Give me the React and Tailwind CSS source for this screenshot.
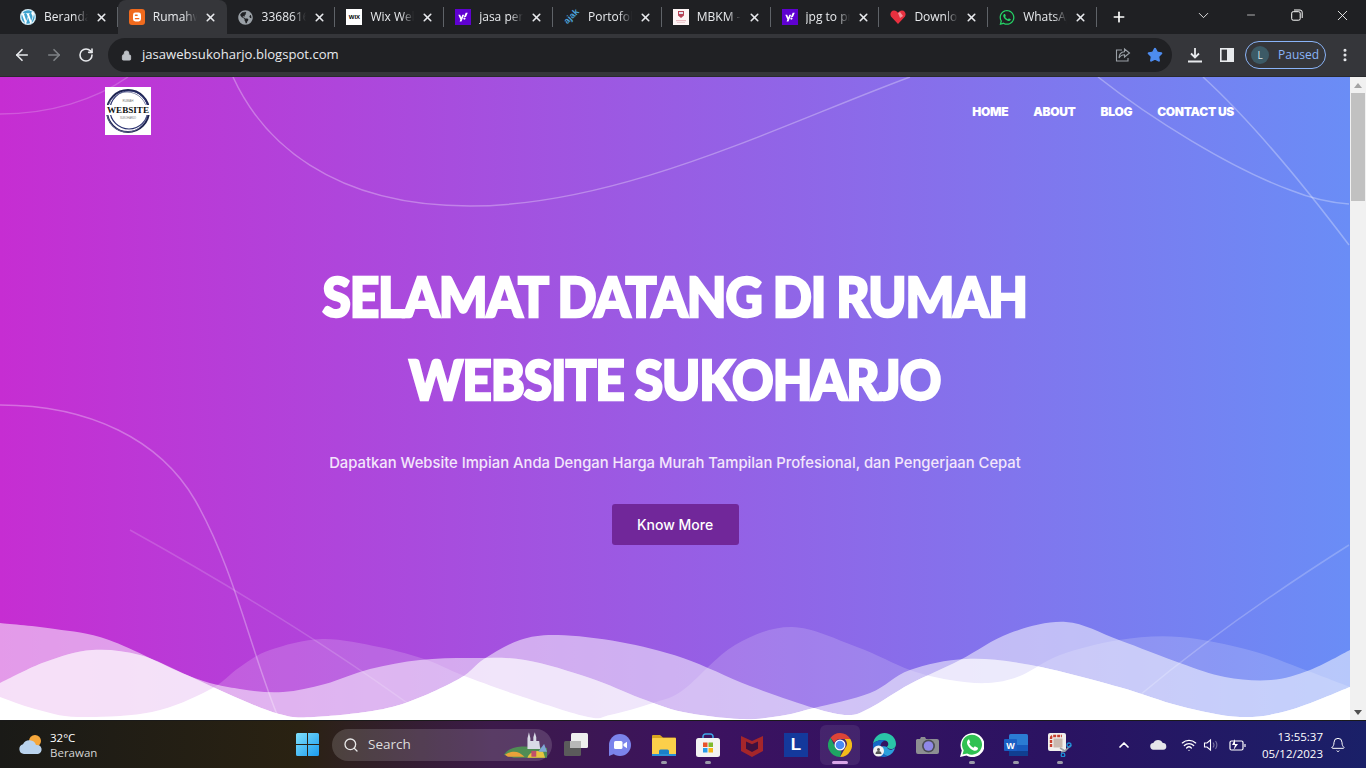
import React from "react";
import { FaWordpress, FaWhatsapp, FaYahoo, FaGlobeAmericas } from "react-icons/fa";
import { Lock, X, Plus, ArrowLeft, ArrowRight, RotateCw, ChevronDown, Minus, Star, ChevronUp, Wifi, Bell, Search, MoreVertical } from "lucide-react";

const smooth = (pts) => {
  let d = `M${pts[0][0]} ${pts[0][1]}`;
  for (let i = 0; i < pts.length - 1; i++) {
    const p0 = pts[Math.max(i - 1, 0)], p1 = pts[i], p2 = pts[i + 1], p3 = pts[Math.min(i + 2, pts.length - 1)];
    const c1x = p1[0] + (p2[0] - p0[0]) / 6, c1y = p1[1] + (p2[1] - p0[1]) / 6;
    const c2x = p2[0] - (p3[0] - p1[0]) / 6, c2y = p2[1] - (p3[1] - p1[1]) / 6;
    d += `C${c1x} ${c1y} ${c2x} ${c2y} ${p2[0]} ${p2[1]}`;
  }
  return d;
};
const closed = (pts) => smooth(pts) + "L1350 780L0 780Z";

const B = [[0,623],[55,629],[109,640],[192,677],[240,689],[283,692],[325,684],[370,669],[420,660],[470,658],[525,660],[590,678],[640,698],[683,712],[740,719],[780,716],[814,708],[870,693],[910,670],[966,659],[1031,665],[1119,687],[1180,706],[1240,717],[1290,710],[1350,687]];
const C = [[0,683],[45,662],[92,650],[140,655],[187,675],[235,697],[279,714],[314,717],[392,707],[457,680],[484,659],[520,640],[558,635],[620,642],[683,658],[750,686],[814,708],[848,715],[870,708],[910,684],[960,660],[1010,633],[1066,622],[1119,640],[1180,663],[1225,677],[1271,680],[1310,670],[1350,650]];
const D = [[0,697],[35,709],[78,717],[152,712],[209,690],[240,667],[270,650],[322,639],[379,647],[427,660],[462,675],[523,697],[588,717],[610,715],[653,703],[683,690],[735,645],[792,627],[857,647],[910,670],[950,680],[988,683],[1020,676],[1060,655],[1119,640],[1180,637],[1249,650],[1300,668],[1350,687]];

const HeroArt = () => (
  <svg className="absolute inset-0 w-full h-full" viewBox="0 77 1350 643" preserveAspectRatio="none">
    <defs>
      <clipPath id="cb"><path d={closed(B)} /></clipPath>
      <clipPath id="cc"><path d={closed(C)} /></clipPath>
    </defs>
    <g fill="none" stroke="#fff" strokeOpacity="0.3" strokeWidth="1.500">
      <path d="M233 77C262 140 330 206 470 206C620 206 780 125 910 77" />
      <path d="M0 114C50 114 95 100 128 77" strokeOpacity="0.2" />
      <path d="M0 405C90 405 160 440 195 500C235 570 250 650 280 722" />
      <path d="M130 530C220 580 320 640 410 705" strokeOpacity="0.16" />
      <path d="M1349 545C1270 595 1200 645 1140 695" strokeOpacity="0.22" />
      <path d="M1098 77C1150 118 1230 168 1290 190C1315 200 1335 203 1349 204" />
      <path d="M1203 77C1250 120 1300 180 1349 245" />
    </g>
    <path d={closed(D)} fill="#fff" fillOpacity="0.17" />
    <path d={closed(B)} fill="#fff" fillOpacity="0.52" />
    <path d={closed(C)} fill="#fff" fillOpacity="0.52" />
    <g clipPath="url(#cb)"><path d={closed(C)} fill="#fff" fillOpacity="0.35" /></g>
    <g clipPath="url(#cb)"><g clipPath="url(#cc)"><path d={closed(D)} fill="#fff" /></g></g>
  </svg>
);

const Logo = () => (
  <div className="w-[46px] h-12 bg-white">
    <svg viewBox="0 0 46 48" className="w-full h-full">
      <circle cx="23" cy="24" r="21" fill="none" stroke="#1d2350" strokeWidth="2" />
      <circle cx="24" cy="23" r="19" fill="none" stroke="#2b3270" strokeWidth="1.200" />
      <circle cx="22" cy="25" r="20" fill="none" stroke="#6a6f98" strokeWidth="0.8" />
      <rect x="0" y="18" width="46" height="10" fill="#fff" />
      <text x="23" y="26" textAnchor="middle" fontSize="8.400" fontWeight="700" fontFamily="Liberation Serif, serif" fill="#111" textLength="42" lengthAdjust="spacingAndGlyphs">WEBSITE</text>
      <text x="23" y="15" textAnchor="middle" fontSize="3" fontFamily="Liberation Sans, sans-serif" fill="#777">RUMAH</text>
      <text x="23" y="32" textAnchor="middle" fontSize="2.600" fontFamily="Liberation Sans, sans-serif" fill="#777">SUKOHARJO</text>
    </svg>
  </div>
);

const Yahoo = () => (
  <span className="w-4 h-4 bg-[#5f01d1] flex items-center justify-center text-white"><FaYahoo size={10} /></span>
);
const Blogger = () => (
  <svg viewBox="0 0 16 16" className="w-4 h-4">
    <rect width="16" height="16" rx="3" fill="#f06a1d" />
    <rect x="4" y="3.500" width="8" height="9" rx="2.400" fill="#fff" />
    <rect x="5.800" y="5.600" width="3" height="1.300" rx=".6" fill="#f06a1d" />
    <rect x="5.800" y="9" width="4.600" height="1.300" rx=".6" fill="#f06a1d" />
  </svg>
);
const WixIcon = () => (
  <span className="w-4 h-4 bg-white flex items-center justify-center text-[6px] font-bold text-black [font-family:'Liberation_Sans',sans-serif]">WIX</span>
);
const Ajak = () => (
  <span className="w-4 h-4 flex items-center justify-center text-[9px] font-bold text-[#4ba3d9] -rotate-45 [font-family:'Liberation_Sans',sans-serif]">ajak</span>
);
const Mbkm = () => (
  <svg viewBox="0 0 16 16" className="w-4 h-4">
    <rect width="16" height="16" fill="#fdf5f5" />
    <path d="M5 2h6v4.500L8 9 5 6.500z" fill="#b54456" />
    <rect x="6" y="3" width="4" height="2" fill="#dfe3ee" />
    <rect x="3" y="11" width="10" height="1.200" fill="#e9b9c0" />
    <rect x="4" y="13" width="8" height="1" fill="#efd0d4" />
  </svg>
);
const Heart = () => (
  <svg viewBox="0 0 16 16" className="w-4 h-4">
    <path d="M8 15L1 7.500C-.5 5 1 1.500 4 1.500c2 0 3 1 4 2.300 1-1.300 2-2.300 4-2.300 3 0 4.500 3.500 3 6z" fill="#e8303f" />
    <path d="M8 4l2-1 3 4-3 2z" fill="#f4929b" />
  </svg>
);

const tabs = [
  { t: "Beranda", i: <FaWordpress size={16} className="text-[#3fa3cf] bg-white rounded-full" /> },
  { t: "Rumahwebsite", i: <Blogger />, active: true },
  { t: "33686160", i: <FaGlobeAmericas size={15} className="text-[#9aa0a6]" /> },
  { t: "Wix Website", i: <WixIcon /> },
  { t: "jasa pembuat", i: <Yahoo /> },
  { t: "Portofolio", i: <Ajak /> },
  { t: "MBKM - Kampus", i: <Mbkm /> },
  { t: "jpg to png", i: <Yahoo /> },
  { t: "Download", i: <Heart /> },
  { t: "WhatsApp", i: <FaWhatsapp size={17} className="text-[#25d366]" /> },
];

const Tab = ({ t, i, active, last }) => (
  <div className={`relative w-[108.800px] h-[34px] flex items-center shrink-0 pl-[11px] ${active ? "bg-[#35363a] rounded-t-lg" : ""}`}>
    <span className="w-4 h-4 flex items-center justify-center shrink-0">{i}</span>
    <span className="ml-2 w-[44px] overflow-hidden whitespace-nowrap text-[12px] text-[#e8eaed] [mask-image:linear-gradient(to_right,black_70%,transparent)]">{t}</span>
    <X size={13} strokeWidth={3} className="ml-[7px] text-[#e8eaed] shrink-0" />
    {!active && !last && <span className="absolute right-0 top-[7px] h-5 w-px bg-[#5f6368]" />}
  </div>
);

const TopBar = () => (
  <div className="h-[34px] bg-[#1f2023] flex items-end pl-[9px] shrink-0">
    {tabs.map((x, n) => <Tab key={n} {...x} />)}
    <div className="h-[34px] flex items-center ml-[14px]"><Plus size={16} strokeWidth={2.500} className="text-white" /></div>
    <div className="ml-auto h-[34px] flex items-center text-white pb-[4px]">
      <ChevronDown size={17} strokeWidth={1.200} className="mr-[33px]" />
      <Minus size={12} strokeWidth={1.300} className="mr-[34px]" />
      <svg viewBox="0 0 12 12" className="w-3 h-3 mr-[31px]" fill="none" stroke="currentColor"><rect x=".7" y="2.700" width="8.500" height="8.500" rx="1.500" /><path d="M3 1h6a2.200 2.200 0 0 1 2.200 2.200V9" /></svg>
      <X size={17} strokeWidth={1.200} className="mr-[15px]" />
    </div>
  </div>
);

const Toolbar = () => (
  <div className="h-[43px] bg-[#35363a] flex items-center shrink-0 border-b border-[#2a2b2e] text-[#e8eaed]">
    <div className="flex items-center w-[108px] pl-[13px]">
      <ArrowLeft size={18} strokeWidth={2.200} />
      <ArrowRight size={18} strokeWidth={2.200} className="ml-[14px] text-[#7f8286]" />
      <RotateCw size={16} strokeWidth={2.400} className="ml-[15px]" />
    </div>
    <div className="w-[1064px] h-[34px] rounded-full bg-[#202124] flex items-center pl-[13px]">
      <Lock size={11} fill="#bdc1c6" className="text-[#bdc1c6]" />
      <span className="ml-[10px] text-[13.100px] text-[#e8eaed] [font-family:'Open_Sans',sans-serif]">jasawebsukoharjo.blogspot.com</span>
      <div className="ml-auto flex items-center pr-[9px]">
        <svg viewBox="0 0 16 16" className="w-4 h-4 mr-[16px]" fill="none" stroke="#9aa0a6" strokeWidth="1.100"><path d="M7 3H1.500v11H13v-3" /><path d="M9.500 2l5 4-5 4V7.700C7 7.700 5 9 4 11c0-3.500 2-6 5.500-6.300z" /></svg>
        <Star size={16} fill="#4d8cf0" className="text-[#4d8cf0]" />
      </div>
    </div>
    <svg viewBox="0 0 16 16" className="w-4 h-4 ml-[15px]" fill="none" stroke="#e8eaed" strokeWidth="1.800"><path d="M8 1v9M4 6.500 8 10.500l4-4M1 14.500h14" /></svg>
    <svg viewBox="0 0 14 14" className="w-[14px] h-[14px] ml-[17px]"><rect x=".8" y=".8" width="12.400" height="12.400" fill="none" stroke="#e8eaed" strokeWidth="1.600" /><rect x="7" y="1" width="6" height="12" fill="#e8eaed" /></svg>
    <div className="ml-[11px] w-[81px] h-7 rounded-full border border-[#8ab4f8] flex items-center pl-[5px]">
      <span className="w-[18px] h-[18px] rounded-full bg-[#3c5a66] text-[10px] text-[#d8e2e8] flex items-center justify-center [font-family:'Open_Sans',sans-serif]">L</span>
      <span className="ml-[9px] text-[12px] text-[#8ab4f8] [font-family:'Open_Sans',sans-serif]">Paused</span>
    </div>
    <MoreVertical size={16} strokeWidth={2.600} className="ml-[11px]" />
  </div>
);

const Hero = () => (
  <div className="relative flex-1 overflow-hidden bg-linear-to-r/srgb from-[#c62dd2] to-[#6a8df6]">
    <HeroArt />
    <div className="relative flex flex-col items-center">
      <header className="w-full flex justify-between pt-[10px] pl-[105px] pr-[116px]">
        <Logo />
        <nav className="flex gap-[25px] h-[48px] items-start pt-[18px] text-[12px] leading-[14px] font-black text-white tracking-[-0.3px] [font-family:Inter,sans-serif]">
          <a>HOME</a><a>ABOUT</a><a>BLOG</a><a>CONTACT US</a>
        </nav>
      </header>
      <h1 className="mt-[120px] text-center text-[55px] leading-[83px] font-black text-white tracking-[-1.2px] [font-family:Lato,sans-serif] [-webkit-text-stroke:2.400px_white] scale-x-[0.935]">
        SELAMAT DATANG DI RUMAH<br />WEBSITE SUKOHARJO
      </h1>
      <p className="mt-[30px] text-[14.800px] leading-6 font-medium text-[#f3e6fb] [font-family:Inter,sans-serif]">Dapatkan Website Impian Anda Dengan Harga Murah Tampilan Profesional, dan Pengerjaan Cepat</p>
      <button className="mt-[29px] w-[127px] h-[41px] rounded-[3px] bg-[#71279a] text-white text-[14px] font-medium [font-family:Inter,sans-serif]">Know More</button>
    </div>
  </div>
);

const Scrollbar = () => (
  <div className="w-4 bg-[#f1f1f1] flex flex-col items-center shrink-0">
    <div className="h-4 flex items-center justify-center"><span className="w-0 h-0 border-x-[4px] border-x-transparent border-b-[5px] border-b-[#a3a3a3]" /></div>
    <div className="w-[14px] h-[108px] bg-[#c1c1c1]" />
    <div className="mt-auto h-4 flex items-center justify-center"><span className="w-0 h-0 border-x-[4px] border-x-transparent border-t-[5px] border-t-[#505050]" /></div>
  </div>
);

const Win = () => (
  <svg viewBox="0 0 23 23" className="w-[23px] h-[23px]">
    <defs><linearGradient id="wg" x1="0" y1="0" x2="1" y2="1"><stop offset="0" stopColor="#7fe0fb" /><stop offset="1" stopColor="#1b9cf0" /></linearGradient></defs>
    <path d="M0 1.500A1.500 1.500 0 0 1 1.500 0H11v11H0zM12 0h9.500A1.500 1.500 0 0 1 23 1.500V11H12zM0 12h11v11H1.500A1.500 1.500 0 0 1 0 21.500zM12 12h11v9.500a1.500 1.500 0 0 1-1.500 1.500H12z" fill="url(#wg)" />
  </svg>
);

const Weather = () => (
  <svg viewBox="0 0 26 24" className="w-[26px] h-6">
    <circle cx="17" cy="8" r="6" fill="#f6a73b" />
    <path d="M6 21a5 5 0 0 1-1-9.800A7 7 0 0 1 18 12a4.600 4.600 0 0 1 2 9z" fill="#b9d3ee" />
  </svg>
);

const Castle = () => (
  <svg viewBox="0 0 48 28" className="w-[47px] h-7">
    <path d="M2 24C10 13 22 15 46 17V27H12z" fill="#4f8d54" />
    <path d="M3 24c8-5 14-4 20 2H6z" fill="#e8a23a" />
    <path d="M26 27c2-6 10-8 16-6l2 6z" fill="#e6c43f" />
    <path d="M26 18V7l1.500-6L29 7v3h3V6l1.500-5L35 6v4h3l1 8z" fill="#d9dbe6" />
    <path d="M37 21l6-8 3 8z" fill="#7fa6d6" />
    <rect x="30" y="20" width="5" height="6" fill="#c2506a" />
  </svg>
);

const Meet = () => (
  <svg viewBox="0 0 24 24" className="w-6 h-6">
    <circle cx="12" cy="12" r="11" fill="#7b83eb" />
    <path d="M1 12v11l5-2z" fill="#7b83eb" />
    <rect x="6" y="8" width="8.500" height="8" rx="1.500" fill="#fff" />
    <path d="M15.500 11l3.500-2.200v6.400L15.500 13z" fill="#fff" />
  </svg>
);
const TaskView = () => (
  <svg viewBox="0 0 24 24" className="w-6 h-6">
    <rect x="0" y="8" width="17" height="15" rx="1.500" fill="#5b5b5b" />
    <rect x="7" y="0" width="17" height="15" rx="1.500" fill="#eeeeee" />
    <rect x="6" y="8" width="11" height="7" fill="#b8b8b8" />
  </svg>
);
const Folder = () => (
  <svg viewBox="0 0 24 24" className="w-6 h-6">
    <path d="M0 3a1 1 0 0 1 1-1h7l3 2.500h12a1 1 0 0 1 1 1V8H0z" fill="#d9a41f" />
    <rect y="5" width="24" height="18" rx="1" fill="#fbcf4a" />
    <path d="M7 23v-5a1.500 1.500 0 0 1 1.500-1.500h7A1.500 1.500 0 0 1 17 18v5z" fill="#1b7fc9" />
    <rect y="21" width="24" height="2" fill="#2a90d8" />
  </svg>
);
const Store = () => (
  <svg viewBox="0 0 24 24" className="w-6 h-6">
    <path d="M7 7V3.500A2.500 2.500 0 0 1 9.500 1h5A2.500 2.500 0 0 1 17 3.500V7" fill="none" stroke="#3fa7e8" strokeWidth="1.500" />
    <rect y="5" width="24" height="19" rx="2.500" fill="#f3f3f3" />
    <rect x="7" y="9.500" width="4.500" height="4.500" fill="#e8532b" />
    <rect x="12.500" y="9.500" width="4.500" height="4.500" fill="#7fba2e" />
    <rect x="7" y="15" width="4.500" height="4.500" fill="#2a9be8" />
    <rect x="12.500" y="15" width="4.500" height="4.500" fill="#f7b519" />
  </svg>
);
const McAfee = () => (
  <svg viewBox="0 0 24 24" className="w-6 h-6">
    <path d="M1 3l11 5 11-5v15l-11 6-11-6z" fill="#a5262a" />
    <path d="M6 8.500l6 2.800 6-2.800v7.200l-6 3.300-6-3.300z" fill="#3d1040" />
  </svg>
);
const LApp = () => (
  <span className="w-6 h-6 bg-[#14399c] text-white text-[17px] font-bold flex items-center justify-center [font-family:'Liberation_Sans',sans-serif]">L</span>
);
const Chrome = () => (
  <svg viewBox="0 0 24 24" className="w-6 h-6">
    <path d="M12 0a12 12 0 0 1 10.400 6H12a6 6 0 0 0-5.600 3.800L2.500 4.700A12 12 0 0 1 12 0z" fill="#dd4437" />
    <path d="M22.400 6A12 12 0 0 1 12 24l5.200-9a6 6 0 0 0-.7-9z" fill="#f3bc1a" />
    <path d="M12 24A12 12 0 0 1 2.500 4.700L7 13.500a6 6 0 0 0 6.500 4.300z" fill="#1fa463" />
    <circle cx="12" cy="12" r="5.500" fill="#fff" />
    <circle cx="12" cy="12" r="4.300" fill="#4a8af4" />
  </svg>
);
const Edge = () => (
  <svg viewBox="0 0 24 24" className="w-6 h-6">
    <path d="M1 11C2 4 7 0 12.500 0 19 0 24 5 24 11c0 3-2 5-5 5-2.500 0-4-1-4-2.500 2-1 2.500-6-4-6.500C6 7 2.500 9 1 11z" fill="#2ac4a8" />
    <path d="M1 11c1.500-2 5-4 10-4 1 0 2 .2 3 .6C10 8 8 11 8.500 15c.3 3.500 3 7 7 8-1 .6-2.500 1-3.500 1C5 24 0 18 1 11z" fill="#1469c7" />
    <path d="M15 14c1 3 4 4 8 1-1 4-4 7-7.500 8-4-1-7-4.500-7-8 1-2 4-2 6.500-1z" fill="#2b9fdc" />
    <circle cx="6.500" cy="18" r="5.500" fill="#f2f2f2" />
    <circle cx="6.500" cy="16.500" r="1.500" fill="#555" />
    <path d="M3.500 21a3 3 0 0 1 6 0z" fill="#555" />
  </svg>
);
const Cam = () => (
  <svg viewBox="0 0 24 24" className="w-6 h-6">
    <path d="M1 6h3l1-2h4l1 2h11a2 2 0 0 1 2 2v11a2 2 0 0 1-2 2H2a2 2 0 0 1-2-2V7z" fill="#8d8f92" />
    <circle cx="12.500" cy="13" r="6.500" fill="#4c4d55" />
    <circle cx="12.500" cy="13" r="4.800" fill="#8f88e8" />
  </svg>
);
const WaTask = () => (
  <svg viewBox="0 0 24 24" className="w-6 h-6">
    <path d="M0 24l1.800-6.500A12 12 0 1 1 6.500 22.500z" fill="#fff" />
    <path d="M2.500 21.500l1.200-4.300A10 10 0 1 1 7.200 20.400z" fill="#2fc152" />
    <path d="M8.500 6.500c-1.500 1-2 3-1 5.200 1.200 2.500 3.500 4.700 6 5.700 2.200.8 4-.1 4.500-1.700l-.2-1-3-1.500-1.300 1.500c-1.800-.7-3.500-2.400-4.300-4.100l1.100-1.300-1.300-3z" fill="#fff" />
  </svg>
);
const Word = () => (
  <svg viewBox="0 0 24 24" className="w-6 h-6">
    <rect x="5" y="1" width="19" height="22" rx="1.500" fill="#2b7cd3" />
    <rect x="5" y="12" width="19" height="6" fill="#185abd" />
    <rect x="5" y="18" width="19" height="5" fill="#103f91" />
    <rect x="0" y="6" width="13" height="12" rx="1" fill="#1a5fc4" />
    <text x="6.500" y="15.500" textAnchor="middle" fontSize="9" fontWeight="700" fontFamily="Liberation Sans, sans-serif" fill="#fff">W</text>
  </svg>
);
const Snip = () => (
  <svg viewBox="0 0 24 24" className="w-6 h-6">
    <rect x="0" y="0" width="18" height="18" rx="2" fill="#f0eeec" />
    <path d="M3 14V5a2 2 0 0 1 2-2h9" fill="none" stroke="#c8402f" strokeWidth="2.400" strokeDasharray="3 1" />
    <rect x="5.500" y="5.500" width="9" height="9" fill="#c9b8ae" />
    <path d="M12 15l5 3 6-6M13 19l4-1" fill="none" stroke="#9ba2a8" strokeWidth="1.500" />
    <circle cx="21" cy="12" r="2" fill="none" stroke="#1c90d8" strokeWidth="1.300" />
    <circle cx="15" cy="22" r="1.800" fill="none" stroke="#1c90d8" strokeWidth="1.300" />
  </svg>
);

const apps = [
  { c: <TaskView /> }, { c: <Meet /> }, { c: <Folder />, dot: 1 }, { c: <Store />, dot: 1 }, { c: <McAfee /> }, { c: <LApp /> },
  { c: <Chrome />, on: 1 }, { c: <Edge /> }, { c: <Cam /> }, { c: <WaTask />, dot: 1 }, { c: <Word />, dot: 1 }, { c: <Snip />, dot: 1 },
];

const AppBtn = ({ c, dot, on }) => (
  <div className="relative w-[44px] h-12 flex items-center justify-center">
    {on && <span className="absolute left-[2px] top-[4px] w-10 h-10 rounded-md bg-white/8" />}
    <span className="relative w-6 h-6 flex items-center justify-center">{c}</span>
    {dot && <span className="absolute bottom-[5px] left-[19px] w-[6px] h-[3px] rounded-full bg-[#9a9aa8]" />}
    {on && <span className="absolute bottom-[5px] left-[14px] w-4 h-[3px] rounded-full bg-[#d9a6e8]" />}
  </div>
);

const Taskbar = () => (
  <div className="h-12 shrink-0 flex items-center border-t border-[#1a1a1a] bg-[linear-gradient(90deg,#1a1a17_0%,#2a2212_22%,#3c1a4a_36%,#3c1260_52%,#2a1362_78%,#1a2068_100%)] text-white [font-family:'Open_Sans',sans-serif]">
    <div className="w-[296px] flex items-center pl-[18px]">
      <Weather />
      <div className="ml-[6px] text-[11.500px] leading-[15px]">
        <div>32°C</div>
        <div className="text-[#d4d4d4]">Berawan</div>
      </div>
    </div>
    <Win />
    <div className="ml-[13px] w-[220px] h-8 rounded-full bg-white/15 flex items-center pl-[11px] pr-[3px]">
      <Search size={16} strokeWidth={2} className="text-[#e8e8e8]" />
      <span className="ml-[9px] text-[13.500px] text-[#dedede]">Search</span>
      <span className="ml-auto"><Castle /></span>
    </div>
    <div className="ml-[2px] flex">{apps.map((a, i) => <AppBtn key={i} {...a} />)}</div>
    <div className="ml-[34px] flex items-center">
      <ChevronUp size={16} strokeWidth={2.600} />
      <svg viewBox="0 0 18 11" className="ml-[18px] w-[17px] h-[11px]"><path d="M4 11a3.500 3.500 0 0 1-.5-7A5.500 5.500 0 0 1 13.500 4 3.500 3.500 0 0 1 14 11z" fill="#e6e6ea" /></svg>
      <Wifi size={16} strokeWidth={2} className="ml-[14px]" />
      <svg viewBox="0 0 16 16" className="ml-[6px] w-4 h-4" fill="none" stroke="#fff" strokeWidth="1.100"><path d="M1.500 6v4h2.500l3.500 3V3L4 6z" /><path d="M10 5.500a4 4 0 0 1 0 5M12.500 4a7 7 0 0 1 0 8" strokeOpacity=".4" /></svg>
      <svg viewBox="0 0 18 14" className="ml-[10px] w-[18px] h-[14px]" fill="none" stroke="#fff" strokeWidth="1.200"><rect x="1" y="3" width="13" height="9" rx="1.500" /><path d="M16 6v3" /><path d="M6 1L3 7h3l-1.500 5L9 6H6z" fill="#fff" stroke="none" /></svg>
    </div>
    <div className="ml-[-2px] w-[78px] text-right text-[11.500px] leading-[17px]">
      <div>13:55:37</div>
      <div>05/12/2023</div>
    </div>
    <Bell size={16} strokeWidth={1.500} className="ml-[7px]" />
  </div>
);

export default function App() {
  return (
    <div className="w-[1366px] h-[768px] flex flex-col overflow-hidden [font-family:'Open_Sans',sans-serif]">
      <TopBar />
      <Toolbar />
      <div className="flex flex-1 min-h-0">
        <Hero />
        <Scrollbar />
      </div>
      <Taskbar />
    </div>
  );
}
